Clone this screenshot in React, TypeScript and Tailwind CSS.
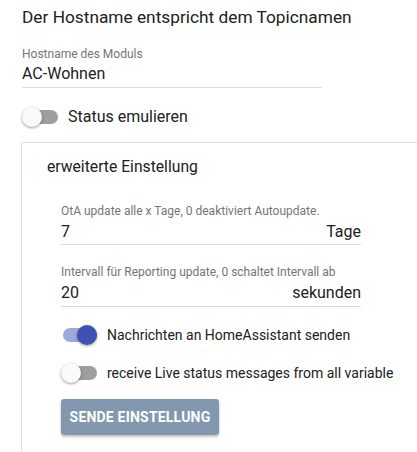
import React from "react";

function Toggle({ on }: { on?: boolean }) {
  return (
    <div className="relative w-[36px] h-[20px] shrink-0">
      <div
        className={
          "absolute left-[2px] right-0 top-[3px] h-[14px] rounded-full " +
          (on ? "bg-[#9fa8da]" : "bg-[#9e9e9e]")
        }
      />
      <div
        className={
          "absolute top-0 w-[20px] h-[20px] rounded-full shadow-[0_1px_3px_rgba(0,0,0,0.4)] " +
          (on ? "left-[16px] bg-[#3f51b5]" : "left-0 bg-[#fafafa]")
        }
      />
    </div>
  );
}

export default function App() {
  return (
    <div
      className="w-[417px] h-[452px] bg-white overflow-hidden text-[#212121]"
      style={{ fontFamily: "Roboto, 'Liberation Sans', sans-serif" }}
    >
      <div className="pl-[22px] pt-[7px]">
        <div className="text-[17.3px] leading-[20px]">Der Hostname entspricht dem Topicnamen</div>
        <div className="mt-[20px] w-[300px]">
          <div className="text-[12px] leading-[14px] text-[#757575]">Hostname des Moduls</div>
          <div className="text-[16px] leading-[20px] mt-[3px] pb-[3px] border-b border-[#dcdcdc]">AC-Wohnen</div>
        </div>
        <div className="flex items-center gap-[10px] mt-[19px]">
          <Toggle />
          <span className="text-[16px] leading-[20px]">Status emulieren</span>
        </div>
      </div>
      <div className="ml-[21px] mt-[15px] border-l border-t border-[#e0e0e0] h-[400px] pl-[25px] pt-[14px]">
        <div className="text-[15.7px] leading-[20px]">erweiterte Einstellung</div>
        <div className="pl-[14px] mt-[27px] w-[315px]">
          <div className="w-[300px]">
            <div className="text-[12px] leading-[14px] text-[#757575]">OtA update alle x Tage, 0 deaktiviert Autoupdate.</div>
            <div className="flex justify-between text-[16px] leading-[20px] mt-[4px] pb-[2px] border-b border-[#dcdcdc]">
              <span>7</span>
              <span>Tage</span>
            </div>
          </div>
          <div className="w-[300px] mt-[20px]">
            <div className="text-[12px] leading-[14px] text-[#757575]">Intervall für Reporting update, 0 schaltet Intervall ab</div>
            <div className="flex justify-between text-[16px] leading-[20px] mt-[4px] pb-[3px] border-b border-[#dcdcdc]">
              <span>20</span>
              <span>sekunden</span>
            </div>
          </div>
          <div className="flex items-center gap-[10px] mt-[18px] whitespace-nowrap">
            <Toggle on />
            <span className="text-[14px] leading-[20px]">Nachrichten an HomeAssistant senden</span>
          </div>
          <div className="flex items-center gap-[10px] mt-[18px] whitespace-nowrap">
            <Toggle />
            <span className="text-[14px] leading-[20px]">receive Live status messages from all variable</span>
          </div>
          <button className="mt-[16px] w-[158px] h-[36px] rounded-[3px] bg-[#8198ae] text-white text-[14px] font-bold tracking-[0.2px] shadow-[0_2px_3px_rgba(0,0,0,0.25)]">
            SENDE EINSTELLUNG
          </button>
        </div>
      </div>
    </div>
  );
}
